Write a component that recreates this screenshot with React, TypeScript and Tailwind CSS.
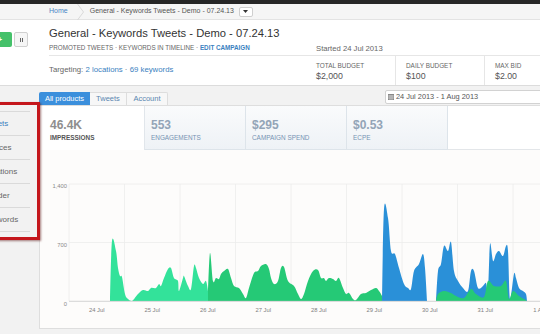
import React from 'react'

type P = [number, number]

const BASE = 300

function smoothPath(pts: P[]) {
  let d = `M${pts[0][0]},${BASE} L${pts[0][0]},${pts[0][1]}`
  for (let i = 0; i < pts.length - 1; i++) {
    const p0 = pts[i - 1] ?? pts[i]
    const p1 = pts[i]
    const p2 = pts[i + 1]
    const p3 = pts[i + 2] ?? p2
    const t = 6
    const c1x = p1[0] + (p2[0] - p0[0]) / t
    const c1y = Math.min(BASE, p1[1] + (p2[1] - p0[1]) / t)
    const c2x = p2[0] - (p3[0] - p1[0]) / t
    const c2y = Math.min(BASE, p2[1] - (p3[1] - p1[1]) / t)
    d += ` C${c1x.toFixed(1)},${c1y.toFixed(1)} ${c2x.toFixed(1)},${c2y.toFixed(1)} ${p2[0]},${p2[1]}`
  }
  d += ` L${pts[pts.length - 1][0]},${BASE} Z`
  return d
}

const greenLight: P[] = [
  [109, 300], [111, 240], [115, 250], [117, 267], [119, 275], [121, 276], [124, 293], [127, 298],
  [131, 300], [137, 293], [142, 289], [147, 290], [150, 287], [155, 287], [158, 283], [160, 285],
  [163, 277], [167, 268], [170, 267], [173, 277], [177, 280], [178, 290], [182, 277], [183, 275],
  [187, 285], [190, 288], [193, 265], [195, 267], [198, 277], [202, 283], [205, 280], [207, 290],
]

const greenDark: P[] = [
  [207, 290], [209, 252], [212, 280], [215, 277], [218, 278], [220, 273], [223, 270], [227, 268],
  [230, 277], [233, 285], [238, 287], [242, 293], [245, 297], [248, 287], [253, 272], [257, 270],
  [260, 265], [265, 263], [268, 268], [270, 277], [273, 283], [277, 280], [280, 267], [283, 266],
  [287, 280], [293, 285], [297, 293], [300, 298], [303, 293], [307, 280], [312, 270], [317, 269],
  [320, 277], [323, 277], [325, 280], [328, 277], [332, 278], [335, 280], [338, 277], [342, 287],
  [345, 293], [348, 292], [352, 298], [355, 299], [360, 293], [365, 292], [370, 289], [375, 287],
  [378, 290], [381, 295], [383, 300],
]

const blueA: P[] = [
  [381, 300], [383, 208], [387, 217], [390, 250], [394, 253], [398, 267], [403, 283], [407, 287],
  [410, 288], [413, 270], [418, 263], [422, 253], [424, 267], [426, 300],
]

const blueB: P[] = [
  [435, 300], [437, 270], [440, 263], [443, 245], [447, 250], [450, 241], [453, 270], [457, 280],
  [462, 287], [467, 290], [470, 270], [473, 270], [477, 287], [482, 285], [485, 282], [487, 290],
  [489, 243], [492, 260], [495, 253], [498, 250], [502, 255], [505, 245], [507, 250], [509, 298],
  [513, 273], [515, 277], [518, 287], [522, 290], [525, 293], [526, 300],
]

const greenUnder: P[] = [
  [435, 300], [437, 293], [443, 290], [450, 292], [455, 295], [463, 297], [470, 288], [475, 293],
  [483, 296], [487, 280], [493, 285], [500, 285], [505, 280], [508, 298], [512, 290], [518, 295],
  [523, 298], [526, 300],
]

const gridX = [68, 123.5, 179, 234.5, 290, 345.5, 401, 456.5, 512]
const dayLabels = ['24 Jul', '25 Jul', '26 Jul', '27 Jul', '28 Jul', '29 Jul', '30 Jul', '31 Jul', '1 Aug']

function Chart() {
  return (
    <svg width="501" height="180" viewBox="39 149 501 180" className="block">
      {[183, 241.5].map((y) => (
        <line key={y} x1="68" x2="540" y1={y} y2={y} stroke="#ececec" strokeWidth="0.8" />
      ))}
      {gridX.map((x) => (
        <line key={x} x1={x} x2={x} y1="183" y2="300" stroke="#ececec" strokeWidth="0.8" />
      ))}
      <text x="66" y="187" fontSize="5.8" fill="#8a8a8a" textAnchor="end">1,400</text>
      <text x="66" y="246" fontSize="5.8" fill="#8a8a8a" textAnchor="end">700</text>
      <text x="66" y="305" fontSize="5.8" fill="#8a8a8a" textAnchor="end">0</text>
      <path d={smoothPath(greenLight)} fill="#33e29a" />
      <path d={smoothPath(greenDark)} fill="#25c976" />
      <path d={smoothPath(blueA)} fill="#2a90d8" />
      <path d={smoothPath(blueB)} fill="#2a90d8" />
      <path d={smoothPath(greenUnder)} fill="#25c976" />
      <line x1="68" x2="540" y1="300.3" y2="300.3" stroke="#c9c9c9" strokeWidth="0.8" />
      {dayLabels.map((l, i) => (
        <text key={l} x={gridX[i] + 27.75} y="311" fontSize="5.8" fill="#808080" textAnchor="middle">
          {l}
        </text>
      ))}
    </svg>
  )
}

const metrics = [
  { value: '46.4K', label: 'IMPRESSIONS', active: true },
  { value: '553', label: 'ENGAGEMENTS' },
  { value: '$295', label: 'CAMPAIGN SPEND' },
  { value: '$0.53', label: 'ECPE' },
]

const sideItems = ['Tweets', 'Devices', 'Locations', 'Gender', 'Keywords']

export default function App() {
  return (
    <div className="relative h-[334px] w-[540px] overflow-hidden bg-[#f2f2f2] font-['Liberation_Sans',Arial,sans-serif] text-[#555]">
      <div className="h-[4px] bg-[#262626]" />

      {/* breadcrumb */}
      <div className="flex h-[16px] items-center border-b border-[#e3e3e3] bg-[#f5f5f5] pl-[49px] text-[7px]">
        <span className="text-[#4a86c5]">Home</span>
        <svg width="8" height="16" viewBox="0 0 8 16" className="ml-[9px] mr-[5px]">
          <polyline points="0.5,0 6.5,8 0.5,16" fill="none" stroke="#d6d6d6" strokeWidth="0.9" />
        </svg>
        <span className="text-[#555]">General - Keywords Tweets - Demo - 07.24.13</span>
        <span className="ml-[5px] flex h-[10px] w-[14px] items-center justify-center rounded-[2px] border border-[#cfcfcf] bg-white">
          <svg width="5" height="3" viewBox="0 0 5 3">
            <polygon points="0,0 5,0 2.5,3" fill="#333" />
          </svg>
        </span>
      </div>

      {/* header */}
      <div className="flex h-[66px] border-b border-[#dcdcdc] bg-white">
        <div className="flex w-[39px] items-start gap-[2px] pt-[12px]">
          <div className="-ml-[14px] flex h-[15px] w-[26px] items-center justify-end rounded-[2px] bg-[#45c16a] pr-[10px]">
            <span className="text-[7px] font-bold leading-none text-white">+</span>
          </div>
          <div className="flex h-[15px] w-[14px] items-center justify-center rounded-[2px] border border-[#d0d0d0] bg-[#f6f6f6]">
            <span className="flex gap-[1px]">
              <span className="h-[4px] w-[1px] bg-[#666]" />
              <span className="h-[4px] w-[1px] bg-[#666]" />
            </span>
          </div>
        </div>
        <div className="flex-1 pl-[10px]">
          <div className="flex h-[36px] border-b border-[#e6e6e6]">
            <div className="w-[261px] pt-[6px]">
              <h1 className="whitespace-nowrap text-[11.2px] leading-[14px] text-[#333]">
                General - Keywords Tweets - Demo - 07.24.13
              </h1>
              <p className="mt-[4px] whitespace-nowrap text-[6.3px] leading-[8px] text-[#666]">
                PROMOTED TWEETS · KEYWORDS IN TIMELINE ·{' '}
                <span className="font-bold text-[#3a7fc0]">EDIT CAMPAIGN</span>
              </p>
            </div>
            <div className="whitespace-nowrap pl-[6px] pt-[24px] text-[7.7px] leading-[9px] text-[#666]">
              Started 24 Jul 2013
            </div>
          </div>
          <div className="flex h-[29px]">
            <div className="flex w-[261px] items-center pb-[2px] text-[7.8px] text-[#666]">
              Targeting:&nbsp;<span className="text-[#3a7fc0]">2 locations</span>&nbsp;·&nbsp;
              <span className="text-[#3a7fc0]">69 keywords</span>
            </div>
            <div className="flex flex-1">
              {[
                ['TOTAL BUDGET', '$2,000', 'w-[85px] pl-[6px]'],
                ['DAILY BUDGET', '$100', 'w-[89px] border-l border-[#e6e6e6] pl-[10px]'],
                ['MAX BID', '$2.00', 'flex-1 border-l border-[#e6e6e6] pl-[10px]'],
              ].map(([l, v, cls]) => (
                <div key={l} className={`${cls} pt-[6px]`}>
                  <div className="whitespace-nowrap text-[6.4px] leading-[8px] text-[#666]">{l}</div>
                  <div className="mt-[1px] text-[8.8px] leading-[11px] text-[#555]">{v}</div>
                </div>
              ))}
            </div>
          </div>
        </div>
      </div>

      {/* body */}
      <div className="flex">
        <div className="w-[39px] shrink-0">
          <div className="-ml-[28px] mt-[25px] w-[58px] border-t border-[#dadada]">
            {sideItems.map((s, i) => (
              <div
                key={s}
                className={`h-[24px] whitespace-nowrap border-b border-[#dadada] pl-[11px] text-[8px] leading-[24px] ${
                  i === 0 ? 'text-[#3a7fc0]' : 'text-[#666]'
                }`}
              >
                {s}
              </div>
            ))}
          </div>
        </div>

        <div className="flex-1">
          <div className="flex h-[19px] items-end">
            <div className="flex text-[7.5px]">
              <div className="flex h-[13px] w-[51px] items-center justify-center rounded-tl-[2px] bg-[#3b8fdc] text-white">
                All products
              </div>
              <div className="flex h-[13px] w-[37px] items-center justify-center border-t border-r border-[#dddddd] bg-[#f7f7f7] text-[#5a86b0]">
                Tweets
              </div>
              <div className="flex h-[13px] w-[41px] items-center justify-center rounded-tr-[2px] border-t border-r border-[#dddddd] bg-[#f7f7f7] text-[#5a86b0]">
                Account
              </div>
            </div>
            <div className="mb-[1px] ml-auto flex h-[14px] w-[156px] items-center gap-[2px] rounded-l-[2px] border border-[#d2d2d2] bg-white pl-[2px] text-[7.4px] text-[#555]">
              <svg width="6" height="6" viewBox="0 0 6 6">
                <rect x="0" y="0" width="6" height="6" fill="#888" />
                <path d="M0 2H6M0 4H6M2 1V6M4 1V6" stroke="#eee" strokeWidth="0.5" />
              </svg>
              24 Jul 2013 - 1 Aug 2013
            </div>
          </div>

          <div className="h-[224px] border-y border-l border-[#dedede] bg-[#fdfcfb]">
            <div className="flex h-[44px]">
              {metrics.map((m) =>
                m.active ? (
                  <div key={m.label} className="w-[105px] border-r border-[#e1e6eb] bg-white pl-[10px] pt-[12px]">
                    <div className="text-[12px] font-bold leading-[14px] text-[#8e8e8e]">{m.value}</div>
                    <div className="mt-[2px] text-[6.4px] font-bold leading-[8px] text-[#555]">{m.label}</div>
                  </div>
                ) : (
                  <div
                    key={m.label}
                    className="w-[101px] border-r border-b border-[#dde4ea] bg-gradient-to-b from-[#fafbfc] to-[#eef2f6] pl-[6px] pt-[12px]"
                  >
                    <div className="text-[12px] font-bold leading-[14px] text-[#93a4b7]">{m.value}</div>
                    <div className="mt-[2px] whitespace-nowrap text-[6.4px] leading-[8px] text-[#7693b3]">{m.label}</div>
                  </div>
                ),
              )}
              <div className="flex-1 border-b border-[#e3e6e9] bg-white" />
            </div>
            <Chart />
          </div>
        </div>
      </div>

      {/* annotation */}
      <div className="absolute left-[-10px] top-[102px] h-[138px] w-[50px] border-[3px] border-[#c4161c] shadow-[1px_1px_2px_rgba(80,0,0,0.5)]" />
    </div>
  )
}
